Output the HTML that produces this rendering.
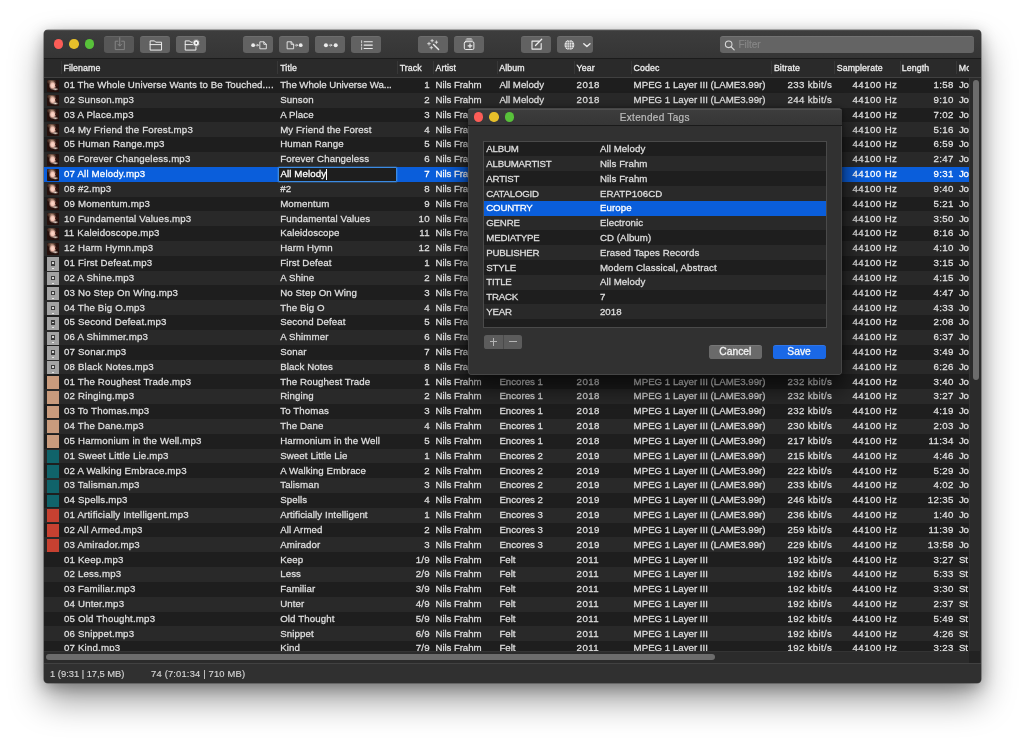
<!DOCTYPE html>
<html><head><meta charset="utf-8"><title>Extended Tags</title>
<style>
*{box-sizing:border-box;margin:0;padding:0}
html,body{width:1024px;height:741px;overflow:hidden;background:#fff}
body{font-family:"Liberation Sans",sans-serif;font-size:9.7px;color:#dfdfdf;position:relative}
#wsh{position:absolute;left:43.5px;top:29.7px;width:937.2px;height:653px;border-radius:4px;
 box-shadow:0 0 0 .6px rgba(0,0,0,.5),0 17px 34px rgba(0,0,0,.4),0 4px 15px rgba(0,0,0,.3)}
#win{will-change:transform;position:absolute;left:44px;top:30px;width:936.7px;height:652.7px;background:#2e2e2e;border-radius:4px;overflow:hidden}
#in{position:absolute;left:-.5px;top:-.3px;width:937.2px;height:653px}
#tb{position:absolute;left:0;top:0;right:0;height:27.8px;background:linear-gradient(#3d3d3d,#353535);box-shadow:inset 0 1px 0 #4c4c4c}
#ico{position:absolute;left:0;top:0;width:937.2px;height:28.3px;pointer-events:none}
.tl{position:absolute;width:9.5px;height:9.5px;border-radius:50%}
.btn{position:absolute;top:6.2px;height:17px;width:29.7px;border-radius:3.2px;background:#626262;box-shadow:inset 0 .7px 0 rgba(255,255,255,.1)}
#search{position:absolute;left:676.7px;top:6.3px;width:253.6px;height:16.7px;border-radius:3.2px;background:#646464;box-shadow:inset 0 .8px 0 rgba(255,255,255,.13);color:#868686;font-size:10px;line-height:16.7px;-webkit-text-stroke:.2px #868686}
#hd{position:absolute;left:0;top:27.8px;right:0;height:20.1px;background:#2a2a2a;border-top:1.2px solid #1c1c1c;border-bottom:1px solid #404040;overflow:hidden}
#hd span{position:absolute;top:1.5px;line-height:17.6px;font-size:8.8px;letter-spacing:.1px;color:#ececec;white-space:nowrap;-webkit-text-stroke:.3px #ececec}
#hd i{position:absolute;top:2.4px;width:1px;height:13.4px;background:#383838}
#tbl{position:absolute;left:0;top:47.9px;width:925.7px;height:573.2px;background:#1e1e1e;overflow:hidden}
.r{position:absolute;left:0;width:100%;height:14.85px;white-space:nowrap}
.r.alt{background:#292929}
.r.sel{background:#0a5edb;color:#fff}
.c{position:absolute;top:.25px;line-height:14.8px;-webkit-text-stroke:.28px currentColor}
.fn{letter-spacing:.17px}.title{letter-spacing:.1px}.artist{letter-spacing:-.1px}.album{letter-spacing:0}
.year{letter-spacing:.4px}.codec{letter-spacing:0}.br{letter-spacing:.32px}.sr{letter-spacing:.42px}.ln{letter-spacing:.35px}.track{letter-spacing:.3px}.mode{letter-spacing:-.35px}
.ic{position:absolute;display:block}
.ic.am{left:3.9px;top:1.9px;width:11.4px;height:11.8px;border-radius:.8px;background:radial-gradient(ellipse 1.9px 1.5px at 78% 44%,#3a1812 0,#3a1812 40%,rgba(60,25,20,0) 100%),radial-gradient(ellipse 3.2px 1.5px at 70% 77%,#f6e6da 0,rgba(230,200,180,0) 100%),radial-gradient(ellipse 3.9px 4.6px at 47% 46%,#fbdccf 0,#f2c2b2 50%,rgba(190,120,100,0) 100%),radial-gradient(ellipse 5px 3px at 38% 14%,#a07c66 0,rgba(90,60,50,0) 100%),#26110d}
.ic.ae{left:3.3px;top:1.7px;width:12.5px;height:13.1px;background:#a2a2a2}
.ic.ae b{position:absolute;left:4px;top:3.6px;width:4.4px;height:4.5px;background:#3c3c3c}
.ic.ae b:after{content:"";position:absolute;left:1.4px;top:1.3px;width:1.7px;height:1.7px;background:#d6d6d6}
.ic.ae:after{content:"";position:absolute;left:4.8px;bottom:1.5px;width:2.8px;height:1px;background:#e6e6e6}
.ic.sq{left:3.5px;top:1.6px;width:12.1px;height:12.8px}
#edit{position:absolute;left:234.5px;top:89.4px;width:119.2px;height:14.6px;background:#1e1e1e;border:1.4px solid #3b8be4;border-radius:1px;box-shadow:0 0 0 .6px rgba(59,139,228,.55)}
#edit u{position:absolute;left:46.8px;top:.8px;width:1px;height:10.8px;background:#fff}
#vs{position:absolute;left:925.7px;top:47.9px;right:0;height:573.2px;background:#2b2b2b;border-left:1px solid #343434}
#vs b{position:absolute;left:2.9px;top:2.8px;width:5.6px;height:299.4px;border-radius:3px;background:#6c6c6c}
#hs{position:absolute;left:0;top:621.1px;width:925.7px;height:12.4px;background:#2b2b2b;border-top:1px solid #343434}
#hs b{position:absolute;left:2.6px;top:2.4px;width:669px;height:5.8px;border-radius:3px;background:#6c6c6c}
#corner{position:absolute;left:925.7px;top:621.1px;width:10.4px;height:12.4px;background:#222}
#st{position:absolute;left:0;top:633.5px;right:0;bottom:0;background:#303030;border-top:1px solid #414141}
#st span{position:absolute;top:.2px;line-height:19px;font-size:9.4px;color:#d4d4d4;-webkit-text-stroke:.15px #d4d4d4;letter-spacing:.1px}
/* dialog */
#dshadow{position:absolute;left:468px;top:108.4px;width:373.6px;height:266px;border-radius:4px;box-shadow:0 14px 24px 2px rgba(0,0,0,.62),0 0 5px rgba(0,0,0,.4)}
#dlg{will-change:transform;position:absolute;left:468px;top:108px;width:373.6px;height:266.6px;border-radius:4px;background:#313131;overflow:hidden;box-shadow:inset 0 0 0 .7px rgba(255,255,255,.14)}
#din{position:absolute;left:0;top:.5px;width:373.6px;height:265.6px}
#dt{position:absolute;left:0;top:0;right:0;height:17.5px;background:linear-gradient(#3d3d3d,#363636);box-shadow:inset 0 1px 0 #4f4f4f;border-bottom:1px solid #1a1a1a;text-align:center;color:#bababa;font-size:10px;letter-spacing:.3px;line-height:18px;-webkit-text-stroke:.22px #bababa}
#tt{position:absolute;left:15.3px;top:32.2px;width:344px;height:187px;background:#1e1e1e;border:1px solid #4a4a4a;overflow:hidden}
.tr{position:absolute;left:0;width:100%;height:14.8px;white-space:nowrap}
.tr.alt{background:#292929}
.tr.sel{background:#0a5edb;color:#fff}
.tr span{position:absolute;top:.45px;line-height:14.8px;-webkit-text-stroke:.28px currentColor}
.tr .k{left:2px;letter-spacing:-.22px}.tr .v{left:115.6px;letter-spacing:.08px}
.pm{position:absolute;top:226.2px;height:14.4px;background:#5c5c5c}
.pm i{position:absolute;background:#b4b4b4}
.db{position:absolute;top:236.1px;height:14.5px;border-radius:2.8px;text-align:center;font-size:10.3px;line-height:14.4px;color:#f2f2f2;-webkit-text-stroke:.3px #f2f2f2;box-shadow:inset 0 .7px 0 rgba(255,255,255,.12)}
</style></head><body>
<div id="wsh"></div>
<div id="win"><div id="in">
 <div id="tb">
  <div class="tl" style="left:10px;top:9.6px;background:#fc5d57"></div>
  <div class="tl" style="left:25.8px;top:9.6px;background:#e6bf2a"></div>
  <div class="tl" style="left:41.3px;top:9.6px;background:#58c13a"></div>
  <div class="btn" style="left:60.9px;background:#575757"></div>
  <div class="btn" style="left:96.8px"></div>
  <div class="btn" style="left:132.6px"></div>
  <div class="btn" style="left:199.7px"></div>
  <div class="btn" style="left:235.7px"></div>
  <div class="btn" style="left:271.7px"></div>
  <div class="btn" style="left:307.7px"></div>
  <div class="btn" style="left:374.5px"></div>
  <div class="btn" style="left:410.8px"></div>
  <div class="btn" style="left:477.6px"></div>
  <div class="btn" style="left:513.6px;width:36.2px"></div>
  <div id="search"><span style="position:absolute;left:18.2px;top:1px">Filter</span></div>
<svg id="ico" viewBox="43.5 29.7 937.2 28.3" fill="none" stroke="#ececec" stroke-width="1" stroke-linecap="round" stroke-linejoin="round">
<g stroke="#858585"><path d="M117.4 40.9h-2.7v8.4h9.1v-8.4h-2.7"/><path d="M119.2 37.4v8.2M117.3 43.8l1.9 2 1.9-2"/></g>
<path d="M149.6 49.4v-8.8h4.4l1.1 1.3h5.9v7.5zM149.6 44.3h11.4"/>
<path d="M184.7 49.4v-8.8h4.4l1.1 1.3h5.2v7.5zM184.7 44.3h10.7"/>
<circle cx="195.7" cy="42.7" r="3.4" fill="#f2f2f2" stroke="#626262" stroke-width=".8"/><circle cx="195.7" cy="42.7" r=".9" fill="#555" stroke="none"/>
<circle cx="252.6" cy="44.9" r="1.9" fill="#ececec" stroke="none"/><path d="M255.4 44.9h2.4M256.9 43.9l1 1-1 1" stroke-width=".8"/>
<path d="M259.7 41.5h3.7l2.4 2.4v4.6h-6.1zM263.3 41.6v2.4h2.4" stroke-width=".9"/>
<path d="M287 41.5h3.7l2.4 2.4v4.6h-6.1zM290.6 41.6v2.4h2.4" stroke-width=".9"/>
<path d="M294.6 44.9h2.4M296.1 43.9l1 1-1 1" stroke-width=".8"/><circle cx="300.2" cy="44.9" r="1.9" fill="#ececec" stroke="none"/>
<circle cx="325.4" cy="44.9" r="2" fill="#ececec" stroke="none"/><path d="M328.6 44.9h2.7M330.3 43.9l1 1-1 1" stroke-width=".8"/><circle cx="335.2" cy="44.9" r="2" fill="#ececec" stroke="none"/>
<path d="M363.6 41.4h8.2M363.6 44.8h8.2M363.6 48.2h8.2" stroke-width="1.1"/><path d="M361.1 40.4v2M361.1 43.8v2M361.1 47.2v2" stroke-width=".8"/>
<path d="M433 44.2l5.1 5" stroke-width="1.4"/>
<path d="M428.5 42.0v2.8M427.1 43.4h2.8M431.6 39.2v2.4M430.4 40.4h2.4M435.9 40.6v2.6M434.6 41.9h2.6M430.8 46.1v2.6M429.5 47.4h2.6" stroke-width=".8"/>
<rect x="463.8" y="41.4" width="9.6" height="7.8" rx="1.4"/><path d="M465.4 39.8h6.4M466.4 38.5h4.4" stroke-width=".8"/><path d="M469.5 43.6v3.8M467.6 45.5h3.8" stroke-width="1.2"/>
<path d="M538.4 40.8h-6.9v8h9.2v-5.6" stroke-width="1.1"/><path d="M535 45.2l6.2-6.2" stroke-width="1.3"/>
<circle cx="568.9" cy="44.7" r="4.9" fill="#f0f0f0" stroke="none"/><g stroke="#6a6a6a" stroke-width=".6"><path d="M564.2 44.7h9.4M565 42.4h7.8M565 47h7.8M568.9 40v9.4"/><ellipse cx="568.9" cy="44.7" rx="2.3" ry="4.7"/></g>
<path d="M583.3 43.4l3.1 2.8 3.1-2.8" stroke-width="1.4"/>
<g stroke="#d6d6d6"><circle cx="728.2" cy="44" r="3.3" stroke-width="1.1"/><path d="M730.7 46.6l3 3" stroke-width="1.3"/></g>
</svg>
 </div>
 <div id="hd">
  <span style="left:20px">Filename</span><span style="left:236.7px">Title</span><span style="left:356.2px">Track</span><span style="left:392px">Artist</span>
  <span style="left:455.7px">Album</span><span style="left:533.1px">Year</span><span style="left:590px">Codec</span><span style="left:730.4px">Bitrate</span>
  <span style="left:793.2px">Samplerate</span><span style="left:858.3px">Length</span><span style="left:915.3px;width:10px;overflow:hidden">Mo</span>
  <i style="left:17.5px"></i><i style="left:233.8px"></i><i style="left:353.7px"></i><i style="left:389.1px"></i><i style="left:453.6px"></i>
  <i style="left:530.5px"></i><i style="left:587.4px"></i><i style="left:727.2px"></i><i style="left:790.6px"></i><i style="left:856.1px"></i><i style="left:912.4px"></i>
 </div>
 <div id="tbl">
<div class="r" style="top:0.30px"><i class="ic am"><b></b></i><span class="c fn" style="left:20.5px;letter-spacing:.08px">01 The Whole Universe Wants to Be Touched....</span><span class="c title" style="left:236.7px;letter-spacing:-.05px">The Whole Universe Wa...</span><span class="c track" style="right:539.2px">1</span><span class="c artist" style="left:392.1px">Nils Frahm</span><span class="c album" style="left:455.9px">All Melody</span><span class="c year" style="left:533.1px">2018</span><span class="c codec" style="left:590.1px">MPEG 1 Layer III (LAME3.99r)</span><span class="c br" style="right:137.0px">233 kbit/s</span><span class="c sr" style="right:71.8px">44100 Hz</span><span class="c ln" style="right:15.4px">1:58</span><span class="c mode" style="left:915.6px">Jo</span></div>
<div class="r alt" style="top:15.12px"><i class="ic am"><b></b></i><span class="c fn" style="left:20.5px">02 Sunson.mp3</span><span class="c title" style="left:236.7px">Sunson</span><span class="c track" style="right:539.2px">2</span><span class="c artist" style="left:392.1px">Nils Frahm</span><span class="c album" style="left:455.9px">All Melody</span><span class="c year" style="left:533.1px">2018</span><span class="c codec" style="left:590.1px">MPEG 1 Layer III (LAME3.99r)</span><span class="c br" style="right:137.0px">244 kbit/s</span><span class="c sr" style="right:71.8px">44100 Hz</span><span class="c ln" style="right:15.4px">9:10</span><span class="c mode" style="left:915.6px">Jo</span></div>
<div class="r" style="top:29.95px"><i class="ic am"><b></b></i><span class="c fn" style="left:20.5px">03 A Place.mp3</span><span class="c title" style="left:236.7px">A Place</span><span class="c track" style="right:539.2px">3</span><span class="c artist" style="left:392.1px">Nils Frahm</span><span class="c album" style="left:455.9px">All Melody</span><span class="c year" style="left:533.1px">2018</span><span class="c codec" style="left:590.1px">MPEG 1 Layer III (LAME3.99r)</span><span class="c br" style="right:137.0px">250 kbit/s</span><span class="c sr" style="right:71.8px">44100 Hz</span><span class="c ln" style="right:15.4px">7:02</span><span class="c mode" style="left:915.6px">Jo</span></div>
<div class="r alt" style="top:44.77px"><i class="ic am"><b></b></i><span class="c fn" style="left:20.5px">04 My Friend the Forest.mp3</span><span class="c title" style="left:236.7px">My Friend the Forest</span><span class="c track" style="right:539.2px">4</span><span class="c artist" style="left:392.1px">Nils Frahm</span><span class="c album" style="left:455.9px">All Melody</span><span class="c year" style="left:533.1px">2018</span><span class="c codec" style="left:590.1px">MPEG 1 Layer III (LAME3.99r)</span><span class="c br" style="right:137.0px">221 kbit/s</span><span class="c sr" style="right:71.8px">44100 Hz</span><span class="c ln" style="right:15.4px">5:16</span><span class="c mode" style="left:915.6px">Jo</span></div>
<div class="r" style="top:59.60px"><i class="ic am"><b></b></i><span class="c fn" style="left:20.5px">05 Human Range.mp3</span><span class="c title" style="left:236.7px">Human Range</span><span class="c track" style="right:539.2px">5</span><span class="c artist" style="left:392.1px">Nils Frahm</span><span class="c album" style="left:455.9px">All Melody</span><span class="c year" style="left:533.1px">2018</span><span class="c codec" style="left:590.1px">MPEG 1 Layer III (LAME3.99r)</span><span class="c br" style="right:137.0px">231 kbit/s</span><span class="c sr" style="right:71.8px">44100 Hz</span><span class="c ln" style="right:15.4px">6:59</span><span class="c mode" style="left:915.6px">Jo</span></div>
<div class="r alt" style="top:74.42px"><i class="ic am"><b></b></i><span class="c fn" style="left:20.5px">06 Forever Changeless.mp3</span><span class="c title" style="left:236.7px">Forever Changeless</span><span class="c track" style="right:539.2px">6</span><span class="c artist" style="left:392.1px">Nils Frahm</span><span class="c album" style="left:455.9px">All Melody</span><span class="c year" style="left:533.1px">2018</span><span class="c codec" style="left:590.1px">MPEG 1 Layer III (LAME3.99r)</span><span class="c br" style="right:137.0px">214 kbit/s</span><span class="c sr" style="right:71.8px">44100 Hz</span><span class="c ln" style="right:15.4px">2:47</span><span class="c mode" style="left:915.6px">Jo</span></div>
<div class="r sel" style="top:89.25px"><i class="ic am"><b></b></i><span class="c fn" style="left:20.5px">07 All Melody.mp3</span><span class="c title" style="left:236.7px">All Melody</span><span class="c track" style="right:539.2px">7</span><span class="c artist" style="left:392.1px">Nils Frahm</span><span class="c album" style="left:455.9px">All Melody</span><span class="c year" style="left:533.1px">2018</span><span class="c codec" style="left:590.1px">MPEG 1 Layer III (LAME3.99r)</span><span class="c br" style="right:137.0px">245 kbit/s</span><span class="c sr" style="right:71.8px">44100 Hz</span><span class="c ln" style="right:15.4px">9:31</span><span class="c mode" style="left:915.6px">Jo</span></div>
<div class="r alt" style="top:104.07px"><i class="ic am"><b></b></i><span class="c fn" style="left:20.5px">08 #2.mp3</span><span class="c title" style="left:236.7px">#2</span><span class="c track" style="right:539.2px">8</span><span class="c artist" style="left:392.1px">Nils Frahm</span><span class="c album" style="left:455.9px">All Melody</span><span class="c year" style="left:533.1px">2018</span><span class="c codec" style="left:590.1px">MPEG 1 Layer III (LAME3.99r)</span><span class="c br" style="right:137.0px">252 kbit/s</span><span class="c sr" style="right:71.8px">44100 Hz</span><span class="c ln" style="right:15.4px">9:40</span><span class="c mode" style="left:915.6px">Jo</span></div>
<div class="r" style="top:118.90px"><i class="ic am"><b></b></i><span class="c fn" style="left:20.5px">09 Momentum.mp3</span><span class="c title" style="left:236.7px">Momentum</span><span class="c track" style="right:539.2px">9</span><span class="c artist" style="left:392.1px">Nils Frahm</span><span class="c album" style="left:455.9px">All Melody</span><span class="c year" style="left:533.1px">2018</span><span class="c codec" style="left:590.1px">MPEG 1 Layer III (LAME3.99r)</span><span class="c br" style="right:137.0px">238 kbit/s</span><span class="c sr" style="right:71.8px">44100 Hz</span><span class="c ln" style="right:15.4px">5:21</span><span class="c mode" style="left:915.6px">Jo</span></div>
<div class="r alt" style="top:133.72px"><i class="ic am"><b></b></i><span class="c fn" style="left:20.5px">10 Fundamental Values.mp3</span><span class="c title" style="left:236.7px">Fundamental Values</span><span class="c track" style="right:539.2px">10</span><span class="c artist" style="left:392.1px">Nils Frahm</span><span class="c album" style="left:455.9px">All Melody</span><span class="c year" style="left:533.1px">2018</span><span class="c codec" style="left:590.1px">MPEG 1 Layer III (LAME3.99r)</span><span class="c br" style="right:137.0px">229 kbit/s</span><span class="c sr" style="right:71.8px">44100 Hz</span><span class="c ln" style="right:15.4px">3:50</span><span class="c mode" style="left:915.6px">Jo</span></div>
<div class="r" style="top:148.55px"><i class="ic am"><b></b></i><span class="c fn" style="left:20.5px">11 Kaleidoscope.mp3</span><span class="c title" style="left:236.7px">Kaleidoscope</span><span class="c track" style="right:539.2px">11</span><span class="c artist" style="left:392.1px">Nils Frahm</span><span class="c album" style="left:455.9px">All Melody</span><span class="c year" style="left:533.1px">2018</span><span class="c codec" style="left:590.1px">MPEG 1 Layer III (LAME3.99r)</span><span class="c br" style="right:137.0px">247 kbit/s</span><span class="c sr" style="right:71.8px">44100 Hz</span><span class="c ln" style="right:15.4px">8:16</span><span class="c mode" style="left:915.6px">Jo</span></div>
<div class="r alt" style="top:163.38px"><i class="ic am"><b></b></i><span class="c fn" style="left:20.5px">12 Harm Hymn.mp3</span><span class="c title" style="left:236.7px">Harm Hymn</span><span class="c track" style="right:539.2px">12</span><span class="c artist" style="left:392.1px">Nils Frahm</span><span class="c album" style="left:455.9px">All Melody</span><span class="c year" style="left:533.1px">2018</span><span class="c codec" style="left:590.1px">MPEG 1 Layer III (LAME3.99r)</span><span class="c br" style="right:137.0px">209 kbit/s</span><span class="c sr" style="right:71.8px">44100 Hz</span><span class="c ln" style="right:15.4px">4:10</span><span class="c mode" style="left:915.6px">Jo</span></div>
<div class="r" style="top:178.20px"><i class="ic ae"><b></b></i><span class="c fn" style="left:20.5px">01 First Defeat.mp3</span><span class="c title" style="left:236.7px">First Defeat</span><span class="c track" style="right:539.2px">1</span><span class="c artist" style="left:392.1px">Nils Frahm</span><span class="c album" style="left:455.9px">All Encores</span><span class="c year" style="left:533.1px">2019</span><span class="c codec" style="left:590.1px">MPEG 1 Layer III (LAME3.99r)</span><span class="c br" style="right:137.0px">232 kbit/s</span><span class="c sr" style="right:71.8px">44100 Hz</span><span class="c ln" style="right:15.4px">3:15</span><span class="c mode" style="left:915.6px">Jo</span></div>
<div class="r alt" style="top:193.03px"><i class="ic ae"><b></b></i><span class="c fn" style="left:20.5px">02 A Shine.mp3</span><span class="c title" style="left:236.7px">A Shine</span><span class="c track" style="right:539.2px">2</span><span class="c artist" style="left:392.1px">Nils Frahm</span><span class="c album" style="left:455.9px">All Encores</span><span class="c year" style="left:533.1px">2019</span><span class="c codec" style="left:590.1px">MPEG 1 Layer III (LAME3.99r)</span><span class="c br" style="right:137.0px">232 kbit/s</span><span class="c sr" style="right:71.8px">44100 Hz</span><span class="c ln" style="right:15.4px">4:15</span><span class="c mode" style="left:915.6px">Jo</span></div>
<div class="r" style="top:207.85px"><i class="ic ae"><b></b></i><span class="c fn" style="left:20.5px">03 No Step On Wing.mp3</span><span class="c title" style="left:236.7px">No Step On Wing</span><span class="c track" style="right:539.2px">3</span><span class="c artist" style="left:392.1px">Nils Frahm</span><span class="c album" style="left:455.9px">All Encores</span><span class="c year" style="left:533.1px">2019</span><span class="c codec" style="left:590.1px">MPEG 1 Layer III (LAME3.99r)</span><span class="c br" style="right:137.0px">232 kbit/s</span><span class="c sr" style="right:71.8px">44100 Hz</span><span class="c ln" style="right:15.4px">4:47</span><span class="c mode" style="left:915.6px">Jo</span></div>
<div class="r alt" style="top:222.68px"><i class="ic ae"><b></b></i><span class="c fn" style="left:20.5px">04 The Big O.mp3</span><span class="c title" style="left:236.7px">The Big O</span><span class="c track" style="right:539.2px">4</span><span class="c artist" style="left:392.1px">Nils Frahm</span><span class="c album" style="left:455.9px">All Encores</span><span class="c year" style="left:533.1px">2019</span><span class="c codec" style="left:590.1px">MPEG 1 Layer III (LAME3.99r)</span><span class="c br" style="right:137.0px">232 kbit/s</span><span class="c sr" style="right:71.8px">44100 Hz</span><span class="c ln" style="right:15.4px">4:33</span><span class="c mode" style="left:915.6px">Jo</span></div>
<div class="r" style="top:237.50px"><i class="ic ae"><b></b></i><span class="c fn" style="left:20.5px">05 Second Defeat.mp3</span><span class="c title" style="left:236.7px">Second Defeat</span><span class="c track" style="right:539.2px">5</span><span class="c artist" style="left:392.1px">Nils Frahm</span><span class="c album" style="left:455.9px">All Encores</span><span class="c year" style="left:533.1px">2019</span><span class="c codec" style="left:590.1px">MPEG 1 Layer III (LAME3.99r)</span><span class="c br" style="right:137.0px">232 kbit/s</span><span class="c sr" style="right:71.8px">44100 Hz</span><span class="c ln" style="right:15.4px">2:08</span><span class="c mode" style="left:915.6px">Jo</span></div>
<div class="r alt" style="top:252.32px"><i class="ic ae"><b></b></i><span class="c fn" style="left:20.5px">06 A Shimmer.mp3</span><span class="c title" style="left:236.7px">A Shimmer</span><span class="c track" style="right:539.2px">6</span><span class="c artist" style="left:392.1px">Nils Frahm</span><span class="c album" style="left:455.9px">All Encores</span><span class="c year" style="left:533.1px">2019</span><span class="c codec" style="left:590.1px">MPEG 1 Layer III (LAME3.99r)</span><span class="c br" style="right:137.0px">232 kbit/s</span><span class="c sr" style="right:71.8px">44100 Hz</span><span class="c ln" style="right:15.4px">6:37</span><span class="c mode" style="left:915.6px">Jo</span></div>
<div class="r" style="top:267.15px"><i class="ic ae"><b></b></i><span class="c fn" style="left:20.5px">07 Sonar.mp3</span><span class="c title" style="left:236.7px">Sonar</span><span class="c track" style="right:539.2px">7</span><span class="c artist" style="left:392.1px">Nils Frahm</span><span class="c album" style="left:455.9px">All Encores</span><span class="c year" style="left:533.1px">2019</span><span class="c codec" style="left:590.1px">MPEG 1 Layer III (LAME3.99r)</span><span class="c br" style="right:137.0px">232 kbit/s</span><span class="c sr" style="right:71.8px">44100 Hz</span><span class="c ln" style="right:15.4px">3:49</span><span class="c mode" style="left:915.6px">Jo</span></div>
<div class="r alt" style="top:281.98px"><i class="ic ae"><b></b></i><span class="c fn" style="left:20.5px">08 Black Notes.mp3</span><span class="c title" style="left:236.7px">Black Notes</span><span class="c track" style="right:539.2px">8</span><span class="c artist" style="left:392.1px">Nils Frahm</span><span class="c album" style="left:455.9px">All Encores</span><span class="c year" style="left:533.1px">2019</span><span class="c codec" style="left:590.1px">MPEG 1 Layer III (LAME3.99r)</span><span class="c br" style="right:137.0px">232 kbit/s</span><span class="c sr" style="right:71.8px">44100 Hz</span><span class="c ln" style="right:15.4px">6:26</span><span class="c mode" style="left:915.6px">Jo</span></div>
<div class="r" style="top:296.80px"><i class="ic sq" style="background:#c99b7d"></i><span class="c fn" style="left:20.5px">01 The Roughest Trade.mp3</span><span class="c title" style="left:236.7px">The Roughest Trade</span><span class="c track" style="right:539.2px">1</span><span class="c artist" style="left:392.1px">Nils Frahm</span><span class="c album" style="left:455.9px">Encores 1</span><span class="c year" style="left:533.1px">2018</span><span class="c codec" style="left:590.1px">MPEG 1 Layer III (LAME3.99r)</span><span class="c br" style="right:137.0px">232 kbit/s</span><span class="c sr" style="right:71.8px">44100 Hz</span><span class="c ln" style="right:15.4px">3:40</span><span class="c mode" style="left:915.6px">Jo</span></div>
<div class="r alt" style="top:311.62px"><i class="ic sq" style="background:#c99b7d"></i><span class="c fn" style="left:20.5px">02 Ringing.mp3</span><span class="c title" style="left:236.7px">Ringing</span><span class="c track" style="right:539.2px">2</span><span class="c artist" style="left:392.1px">Nils Frahm</span><span class="c album" style="left:455.9px">Encores 1</span><span class="c year" style="left:533.1px">2018</span><span class="c codec" style="left:590.1px">MPEG 1 Layer III (LAME3.99r)</span><span class="c br" style="right:137.0px">232 kbit/s</span><span class="c sr" style="right:71.8px">44100 Hz</span><span class="c ln" style="right:15.4px">3:27</span><span class="c mode" style="left:915.6px">Jo</span></div>
<div class="r" style="top:326.45px"><i class="ic sq" style="background:#c99b7d"></i><span class="c fn" style="left:20.5px">03 To Thomas.mp3</span><span class="c title" style="left:236.7px">To Thomas</span><span class="c track" style="right:539.2px">3</span><span class="c artist" style="left:392.1px">Nils Frahm</span><span class="c album" style="left:455.9px">Encores 1</span><span class="c year" style="left:533.1px">2018</span><span class="c codec" style="left:590.1px">MPEG 1 Layer III (LAME3.99r)</span><span class="c br" style="right:137.0px">232 kbit/s</span><span class="c sr" style="right:71.8px">44100 Hz</span><span class="c ln" style="right:15.4px">4:19</span><span class="c mode" style="left:915.6px">Jo</span></div>
<div class="r alt" style="top:341.27px"><i class="ic sq" style="background:#c99b7d"></i><span class="c fn" style="left:20.5px">04 The Dane.mp3</span><span class="c title" style="left:236.7px">The Dane</span><span class="c track" style="right:539.2px">4</span><span class="c artist" style="left:392.1px">Nils Frahm</span><span class="c album" style="left:455.9px">Encores 1</span><span class="c year" style="left:533.1px">2018</span><span class="c codec" style="left:590.1px">MPEG 1 Layer III (LAME3.99r)</span><span class="c br" style="right:137.0px">230 kbit/s</span><span class="c sr" style="right:71.8px">44100 Hz</span><span class="c ln" style="right:15.4px">2:03</span><span class="c mode" style="left:915.6px">Jo</span></div>
<div class="r" style="top:356.10px"><i class="ic sq" style="background:#c99b7d"></i><span class="c fn" style="left:20.5px">05 Harmonium in the Well.mp3</span><span class="c title" style="left:236.7px">Harmonium in the Well</span><span class="c track" style="right:539.2px">5</span><span class="c artist" style="left:392.1px">Nils Frahm</span><span class="c album" style="left:455.9px">Encores 1</span><span class="c year" style="left:533.1px">2018</span><span class="c codec" style="left:590.1px">MPEG 1 Layer III (LAME3.99r)</span><span class="c br" style="right:137.0px">217 kbit/s</span><span class="c sr" style="right:71.8px">44100 Hz</span><span class="c ln" style="right:15.4px">11:34</span><span class="c mode" style="left:915.6px">Jo</span></div>
<div class="r alt" style="top:370.93px"><i class="ic sq" style="background:#10636a"></i><span class="c fn" style="left:20.5px">01 Sweet Little Lie.mp3</span><span class="c title" style="left:236.7px">Sweet Little Lie</span><span class="c track" style="right:539.2px">1</span><span class="c artist" style="left:392.1px">Nils Frahm</span><span class="c album" style="left:455.9px">Encores 2</span><span class="c year" style="left:533.1px">2019</span><span class="c codec" style="left:590.1px">MPEG 1 Layer III (LAME3.99r)</span><span class="c br" style="right:137.0px">215 kbit/s</span><span class="c sr" style="right:71.8px">44100 Hz</span><span class="c ln" style="right:15.4px">4:46</span><span class="c mode" style="left:915.6px">Jo</span></div>
<div class="r" style="top:385.75px"><i class="ic sq" style="background:#10636a"></i><span class="c fn" style="left:20.5px">02 A Walking Embrace.mp3</span><span class="c title" style="left:236.7px">A Walking Embrace</span><span class="c track" style="right:539.2px">2</span><span class="c artist" style="left:392.1px">Nils Frahm</span><span class="c album" style="left:455.9px">Encores 2</span><span class="c year" style="left:533.1px">2019</span><span class="c codec" style="left:590.1px">MPEG 1 Layer III (LAME3.99r)</span><span class="c br" style="right:137.0px">222 kbit/s</span><span class="c sr" style="right:71.8px">44100 Hz</span><span class="c ln" style="right:15.4px">5:29</span><span class="c mode" style="left:915.6px">Jo</span></div>
<div class="r alt" style="top:400.57px"><i class="ic sq" style="background:#10636a"></i><span class="c fn" style="left:20.5px">03 Talisman.mp3</span><span class="c title" style="left:236.7px">Talisman</span><span class="c track" style="right:539.2px">3</span><span class="c artist" style="left:392.1px">Nils Frahm</span><span class="c album" style="left:455.9px">Encores 2</span><span class="c year" style="left:533.1px">2019</span><span class="c codec" style="left:590.1px">MPEG 1 Layer III (LAME3.99r)</span><span class="c br" style="right:137.0px">233 kbit/s</span><span class="c sr" style="right:71.8px">44100 Hz</span><span class="c ln" style="right:15.4px">4:02</span><span class="c mode" style="left:915.6px">Jo</span></div>
<div class="r" style="top:415.40px"><i class="ic sq" style="background:#10636a"></i><span class="c fn" style="left:20.5px">04 Spells.mp3</span><span class="c title" style="left:236.7px">Spells</span><span class="c track" style="right:539.2px">4</span><span class="c artist" style="left:392.1px">Nils Frahm</span><span class="c album" style="left:455.9px">Encores 2</span><span class="c year" style="left:533.1px">2019</span><span class="c codec" style="left:590.1px">MPEG 1 Layer III (LAME3.99r)</span><span class="c br" style="right:137.0px">246 kbit/s</span><span class="c sr" style="right:71.8px">44100 Hz</span><span class="c ln" style="right:15.4px">12:35</span><span class="c mode" style="left:915.6px">Jo</span></div>
<div class="r alt" style="top:430.22px"><i class="ic sq" style="background:#c64131"></i><span class="c fn" style="left:20.5px">01 Artificially Intelligent.mp3</span><span class="c title" style="left:236.7px">Artificially Intelligent</span><span class="c track" style="right:539.2px">1</span><span class="c artist" style="left:392.1px">Nils Frahm</span><span class="c album" style="left:455.9px">Encores 3</span><span class="c year" style="left:533.1px">2019</span><span class="c codec" style="left:590.1px">MPEG 1 Layer III (LAME3.99r)</span><span class="c br" style="right:137.0px">236 kbit/s</span><span class="c sr" style="right:71.8px">44100 Hz</span><span class="c ln" style="right:15.4px">1:40</span><span class="c mode" style="left:915.6px">Jo</span></div>
<div class="r" style="top:445.05px"><i class="ic sq" style="background:#c64131"></i><span class="c fn" style="left:20.5px">02 All Armed.mp3</span><span class="c title" style="left:236.7px">All Armed</span><span class="c track" style="right:539.2px">2</span><span class="c artist" style="left:392.1px">Nils Frahm</span><span class="c album" style="left:455.9px">Encores 3</span><span class="c year" style="left:533.1px">2019</span><span class="c codec" style="left:590.1px">MPEG 1 Layer III (LAME3.99r)</span><span class="c br" style="right:137.0px">259 kbit/s</span><span class="c sr" style="right:71.8px">44100 Hz</span><span class="c ln" style="right:15.4px">11:39</span><span class="c mode" style="left:915.6px">Jo</span></div>
<div class="r alt" style="top:459.88px"><i class="ic sq" style="background:#c64131"></i><span class="c fn" style="left:20.5px">03 Amirador.mp3</span><span class="c title" style="left:236.7px">Amirador</span><span class="c track" style="right:539.2px">3</span><span class="c artist" style="left:392.1px">Nils Frahm</span><span class="c album" style="left:455.9px">Encores 3</span><span class="c year" style="left:533.1px">2019</span><span class="c codec" style="left:590.1px">MPEG 1 Layer III (LAME3.99r)</span><span class="c br" style="right:137.0px">229 kbit/s</span><span class="c sr" style="right:71.8px">44100 Hz</span><span class="c ln" style="right:15.4px">13:58</span><span class="c mode" style="left:915.6px">Jo</span></div>
<div class="r" style="top:474.70px"><span class="c fn" style="left:20.5px">01 Keep.mp3</span><span class="c title" style="left:236.7px">Keep</span><span class="c track" style="right:539.2px">1/9</span><span class="c artist" style="left:392.1px">Nils Frahm</span><span class="c album" style="left:455.9px">Felt</span><span class="c year" style="left:533.1px">2011</span><span class="c codec" style="left:590.1px">MPEG 1 Layer III</span><span class="c br" style="right:137.0px">192 kbit/s</span><span class="c sr" style="right:71.8px">44100 Hz</span><span class="c ln" style="right:15.4px">3:27</span><span class="c mode" style="left:915.6px">St</span></div>
<div class="r alt" style="top:489.52px"><span class="c fn" style="left:20.5px">02 Less.mp3</span><span class="c title" style="left:236.7px">Less</span><span class="c track" style="right:539.2px">2/9</span><span class="c artist" style="left:392.1px">Nils Frahm</span><span class="c album" style="left:455.9px">Felt</span><span class="c year" style="left:533.1px">2011</span><span class="c codec" style="left:590.1px">MPEG 1 Layer III</span><span class="c br" style="right:137.0px">192 kbit/s</span><span class="c sr" style="right:71.8px">44100 Hz</span><span class="c ln" style="right:15.4px">5:33</span><span class="c mode" style="left:915.6px">St</span></div>
<div class="r" style="top:504.35px"><span class="c fn" style="left:20.5px">03 Familiar.mp3</span><span class="c title" style="left:236.7px">Familiar</span><span class="c track" style="right:539.2px">3/9</span><span class="c artist" style="left:392.1px">Nils Frahm</span><span class="c album" style="left:455.9px">Felt</span><span class="c year" style="left:533.1px">2011</span><span class="c codec" style="left:590.1px">MPEG 1 Layer III</span><span class="c br" style="right:137.0px">192 kbit/s</span><span class="c sr" style="right:71.8px">44100 Hz</span><span class="c ln" style="right:15.4px">3:30</span><span class="c mode" style="left:915.6px">St</span></div>
<div class="r alt" style="top:519.17px"><span class="c fn" style="left:20.5px">04 Unter.mp3</span><span class="c title" style="left:236.7px">Unter</span><span class="c track" style="right:539.2px">4/9</span><span class="c artist" style="left:392.1px">Nils Frahm</span><span class="c album" style="left:455.9px">Felt</span><span class="c year" style="left:533.1px">2011</span><span class="c codec" style="left:590.1px">MPEG 1 Layer III</span><span class="c br" style="right:137.0px">192 kbit/s</span><span class="c sr" style="right:71.8px">44100 Hz</span><span class="c ln" style="right:15.4px">2:37</span><span class="c mode" style="left:915.6px">St</span></div>
<div class="r" style="top:534.00px"><span class="c fn" style="left:20.5px">05 Old Thought.mp3</span><span class="c title" style="left:236.7px">Old Thought</span><span class="c track" style="right:539.2px">5/9</span><span class="c artist" style="left:392.1px">Nils Frahm</span><span class="c album" style="left:455.9px">Felt</span><span class="c year" style="left:533.1px">2011</span><span class="c codec" style="left:590.1px">MPEG 1 Layer III</span><span class="c br" style="right:137.0px">192 kbit/s</span><span class="c sr" style="right:71.8px">44100 Hz</span><span class="c ln" style="right:15.4px">5:49</span><span class="c mode" style="left:915.6px">St</span></div>
<div class="r alt" style="top:548.82px"><span class="c fn" style="left:20.5px">06 Snippet.mp3</span><span class="c title" style="left:236.7px">Snippet</span><span class="c track" style="right:539.2px">6/9</span><span class="c artist" style="left:392.1px">Nils Frahm</span><span class="c album" style="left:455.9px">Felt</span><span class="c year" style="left:533.1px">2011</span><span class="c codec" style="left:590.1px">MPEG 1 Layer III</span><span class="c br" style="right:137.0px">192 kbit/s</span><span class="c sr" style="right:71.8px">44100 Hz</span><span class="c ln" style="right:15.4px">4:26</span><span class="c mode" style="left:915.6px">St</span></div>
<div class="r" style="top:563.65px"><span class="c fn" style="left:20.5px">07 Kind.mp3</span><span class="c title" style="left:236.7px">Kind</span><span class="c track" style="right:539.2px">7/9</span><span class="c artist" style="left:392.1px">Nils Frahm</span><span class="c album" style="left:455.9px">Felt</span><span class="c year" style="left:533.1px">2011</span><span class="c codec" style="left:590.1px">MPEG 1 Layer III</span><span class="c br" style="right:137.0px">192 kbit/s</span><span class="c sr" style="right:71.8px">44100 Hz</span><span class="c ln" style="right:15.4px">3:23</span><span class="c mode" style="left:915.6px">St</span></div>
  <div id="edit"><u></u></div>
  <span class="c title" style="left:236.9px;top:89.85px;color:#fff">All Melody</span>
 </div>
 <div id="vs"><b></b></div>
 <div id="hs"><b></b></div>
 <div id="corner"></div>
 <div id="st"><span style="left:6.6px;letter-spacing:-.03px">1 (9:31 | 17,5 MB)</span><span style="left:107.6px;letter-spacing:.17px">74 (7:01:34 | 710 MB)</span></div>
</div></div>
<div id="dshadow"></div>
<div id="dlg"><div id="din">
 <div id="dt">Extended Tags</div>
 <div class="tl" style="left:5.5px;top:3.5px;background:#fc5d57"></div>
 <div class="tl" style="left:21.2px;top:3.5px;background:#e6bf2a"></div>
 <div class="tl" style="left:36.8px;top:3.5px;background:#58c13a"></div>
 <div id="tt">
<div class="tr" style="top:0.00px"><span class="k">ALBUM</span><span class="v">All Melody</span></div>
<div class="tr alt" style="top:14.80px"><span class="k">ALBUMARTIST</span><span class="v">Nils Frahm</span></div>
<div class="tr" style="top:29.60px"><span class="k">ARTIST</span><span class="v">Nils Frahm</span></div>
<div class="tr alt" style="top:44.40px"><span class="k">CATALOGID</span><span class="v">ERATP106CD</span></div>
<div class="tr sel" style="top:59.20px"><span class="k">COUNTRY</span><span class="v">Europe</span></div>
<div class="tr alt" style="top:74.00px"><span class="k">GENRE</span><span class="v">Electronic</span></div>
<div class="tr" style="top:88.80px"><span class="k">MEDIATYPE</span><span class="v">CD (Album)</span></div>
<div class="tr alt" style="top:103.60px"><span class="k">PUBLISHER</span><span class="v">Erased Tapes Records</span></div>
<div class="tr" style="top:118.40px"><span class="k">STYLE</span><span class="v">Modern Classical, Abstract</span></div>
<div class="tr alt" style="top:133.20px"><span class="k">TITLE</span><span class="v">All Melody</span></div>
<div class="tr" style="top:148.00px"><span class="k">TRACK</span><span class="v">7</span></div>
<div class="tr alt" style="top:162.80px"><span class="k">YEAR</span><span class="v">2018</span></div>
 </div>
 <div class="pm" style="left:16px;width:38.2px;border-radius:2.6px"><i style="left:5.8px;top:6.7px;width:7.4px;height:1px"></i><i style="left:9px;top:3.5px;width:1px;height:7.4px"></i><i style="left:19.2px;top:0;width:.8px;height:14.4px;background:#4a4a4a"></i><i style="left:24.6px;top:6.7px;width:8.2px;height:1px"></i></div>
 <div class="db" style="left:240.8px;width:53.1px;background:#6a6a6a">Cancel</div>
 <div class="db" style="left:304.5px;width:53.1px;background:#1a68e6;color:#fff">Save</div>
</div></div>
</body></html>
